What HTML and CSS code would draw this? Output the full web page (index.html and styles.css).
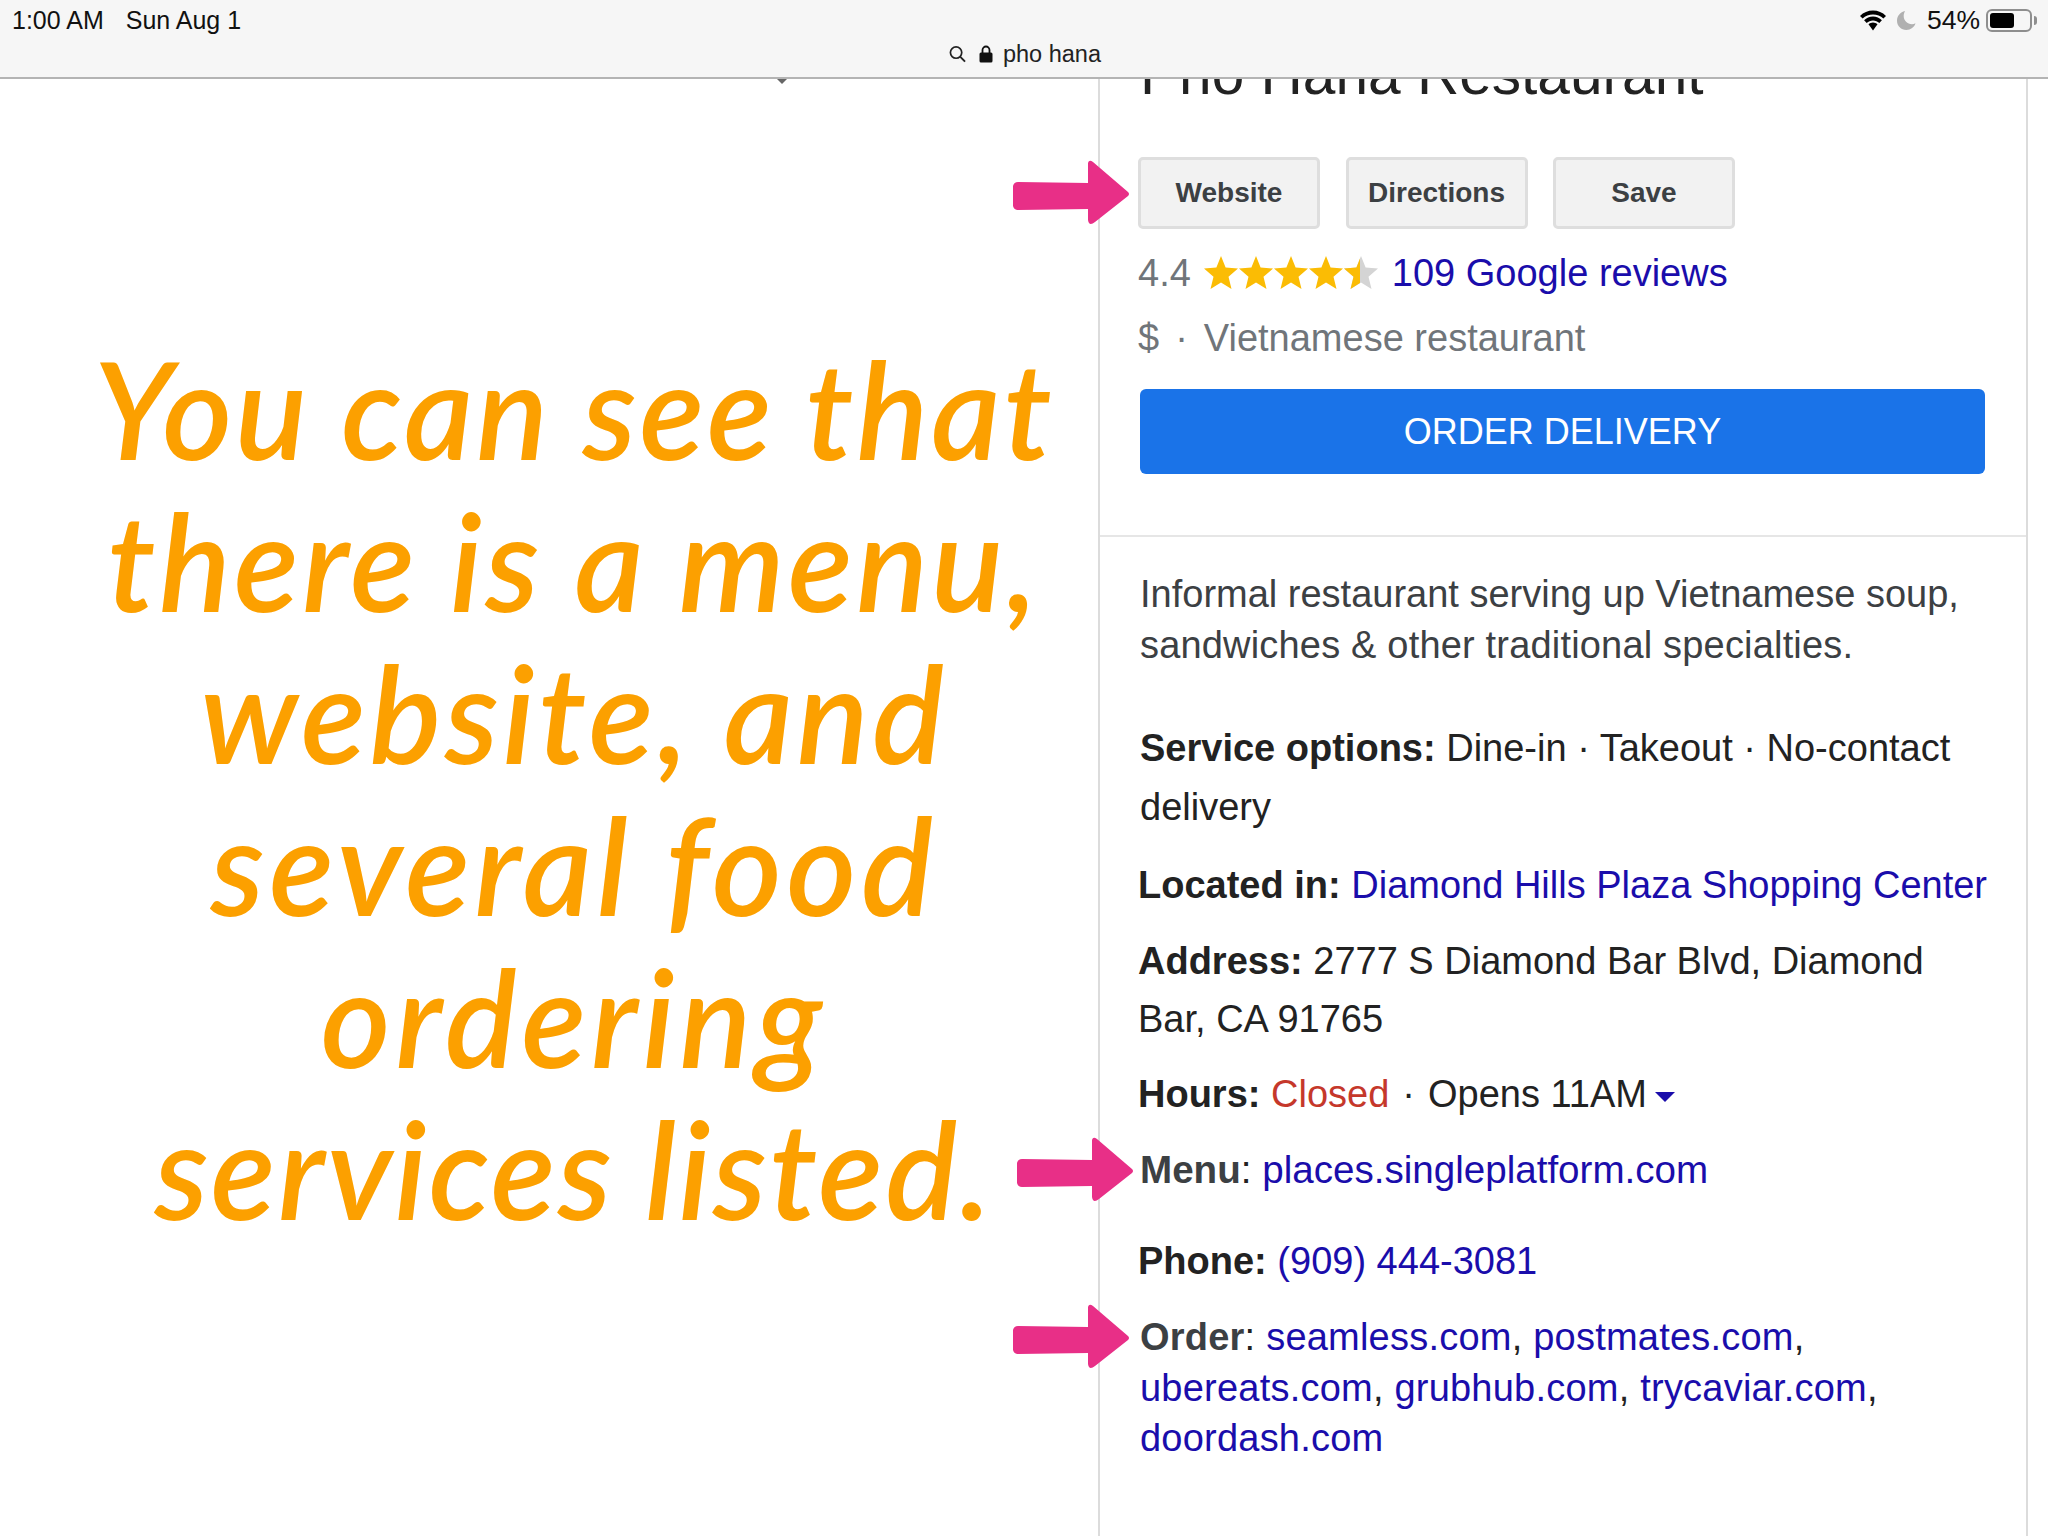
FILE: index.html
```html
<!DOCTYPE html>
<html lang="en">
<head>
<meta charset="utf-8">
<title>pho hana</title>
<link rel="stylesheet" href="styles.css">
</head>
<body>
<svg class="defs" width="0" height="0" aria-hidden="true">
  <defs>
    <path id="star" d="M17 0 L21.6 11.6 L34 12.6 L24.5 20.8 L27.5 33 L17 26.4 L6.5 33 L9.5 20.8 L0 12.6 L12.4 11.6 Z"/>
    <clipPath id="half"><rect x="0" y="0" width="16" height="34"/></clipPath>
    <path id="arrow" d="M5 22 L75 23 L75 3 Q76 -1 80 2 L115 32 Q117 34 115 36 L82 62 Q76 67 75 60 L75 49 L5 50 Q1 50 0 46 L0 26 Q1 22 5 22 Z"/>
  </defs>
</svg>
<header class="topbar">
  <div class="status">
    <div class="status-left"><span>1:00 AM</span><span>Sun Aug 1</span></div>
    <div class="status-right">
      <svg class="wifi" viewBox="0 0 28 21"><path d="M14 4.500c4 0 7.600 1.500 10.400 4.100l2.600-2.700C23.500 2.500 19 .5 14 .5S4.500 2.500 1 5.900l2.600 2.700C6.400 6 10 4.500 14 4.500z"/><path d="M14 10.500c2.400 0 4.600.9 6.300 2.500l2.600-2.700C20.600 8 17.400 6.600 14 6.600S7.400 8 5.100 10.300L7.700 13c1.700-1.600 3.900-2.500 6.300-2.500z"/><path d="M14 12.500c-1.700 0-3.300.7-4.500 1.800L14 20.500l4.500-6.200c-1.200-1.100-2.800-1.800-4.500-1.800z"/></svg>
      <svg class="moon" viewBox="0 0 19 19"><path d="M8 0C3.400 1 0 4.900 0 9.700 0 14.900 4.200 19 9.400 19c4.300 0 7.900-2.800 9.100-6.700-1.100.6-2.300.9-3.600.9C10.400 13.200 6.700 9.500 6.700 5c0-1.800.5-3.500 1.300-5z"/></svg>
      <span class="pct">54%</span>
      <div class="battery"><div class="battery-fill"></div></div>
      <div class="battery-nub"></div>
    </div>
  </div>
  <div class="urlbar">
    <svg class="search" viewBox="0 0 18 18"><circle cx="7.500" cy="7.500" r="6" fill="none" stroke="#222" stroke-width="1.800"/><path d="M12 12l5 5" stroke="#222" stroke-width="2"/></svg>
    <svg class="lock" viewBox="0 0 14 18"><path d="M3.500 8V5a3.500 3.500 0 0 1 7 0v3" fill="none" stroke="#111" stroke-width="1.800"/><rect x="0.500" y="7.500" width="13" height="10" rx="1.500" fill="#111"/></svg>
    <span class="url">pho hana</span>
  </div>
</header>

<main class="page">
  <section class="left">
    <div class="caret"></div>
    <p class="note">
      <span class="note-line l1">You can see that</span>
      <span class="note-line l2">there is a menu,</span>
      <span class="note-line l3">website, and</span>
      <span class="note-line l4">several food</span>
      <span class="note-line l5">ordering</span>
      <span class="note-line l6">services listed.</span>
    </p>
  </section>

  <section class="panel">
    <div class="panel-top">
      <h1 class="title">Pho Hana Restaurant</h1>
      <div class="buttons">
        <div class="btn">Website</div>
        <div class="btn">Directions</div>
        <div class="btn">Save</div>
      </div>
      <div class="rating">
        <span class="muted">4.4</span>
        <svg class="stars" viewBox="0 0 174 34">
          <use href="#star" class="s-on"/>
          <use href="#star" x="35" class="s-on"/>
          <use href="#star" x="70" class="s-on"/>
          <use href="#star" x="105" class="s-on"/>
          <use href="#star" x="140" class="s-off"/>
          <g transform="translate(140 0)"><use href="#star" class="s-on" clip-path="url(#half)"/></g>
        </svg>
        <a class="link">109 Google reviews</a>
      </div>
      <div class="type muted"><span>$</span><span class="type-dot">·</span><span>Vietnamese restaurant</span></div>
      <div class="order-btn">ORDER DELIVERY</div>
    </div>
    <div class="panel-body">
      <p class="desc">Informal restaurant serving up Vietnamese soup, <span class="desc-end">sandwiches &amp; other traditional specialties.</span></p>
      <p class="fact f-service"><b>Service options:</b> Dine-in · Takeout · No-contact delivery</p>
      <p class="fact f-located shift"><b>Located in:</b> <a class="link">Diamond Hills Plaza Shopping Center</a></p>
      <p class="fact f-address shift"><b>Address:</b> 2777 S Diamond Bar Blvd, Diamond Bar, CA 91765</p>
      <p class="fact f-hours shift"><b>Hours:</b> <span class="closed">Closed</span><span class="hours-dot">·</span>Opens 11AM<span class="tri"></span></p>
      <p class="fact f-menu"><b class="soft">Menu</b>: <a class="link">places.singleplatform.com</a></p>
      <p class="fact f-phone shift"><b>Phone:</b> <a class="link">(909) 444-3081</a></p>
      <p class="fact f-order"><b class="soft">Order</b>: <a class="link">seamless.com</a>, <a class="link">postmates.com</a>, <a class="link">ubereats.com</a>, <a class="link">grubhub.com</a>, <a class="link">trycaviar.com</a>, <a class="link">doordash.com</a></p>
    </div>
    <svg class="arrow a1" viewBox="0 0 117 66"><use href="#arrow"/></svg>
    <svg class="arrow a2" viewBox="0 0 117 66"><use href="#arrow"/></svg>
    <svg class="arrow a3" viewBox="0 0 117 66"><use href="#arrow"/></svg>
  </section>
</main>
</body>
</html>
```

FILE: styles.css
```css
* { box-sizing: border-box; }
html, body { margin: 0; padding: 0; }
body {
  width: 2048px;
  height: 1536px;
  overflow: hidden;
  background: #fff;
  font-family: "Liberation Sans", Arial, sans-serif;
  display: flex;
  flex-direction: column;
}
.defs { position: absolute; }
p, h1 { margin: 0; font-weight: normal; }

.topbar {
  height: 79px;
  flex: none;
  background: #f6f6f6;
  border-bottom: 2px solid #b4b4b4;
  position: relative;
  z-index: 2;
}
.status {
  height: 40px;
  display: flex;
  justify-content: space-between;
  align-items: center;
  font-size: 25px;
  color: #111;
}
.status-left { display: flex; gap: 22px; padding-left: 12px; }
.status-right { display: flex; align-items: center; padding-right: 11px; }
.wifi { width: 28px; height: 21px; fill: #000; }
.moon { width: 19px; height: 19px; margin-left: 10px; fill: #b0b0b0; }
.pct { margin-left: 11px; font-size: 26.500px; width: 54px; white-space: nowrap; }
.battery {
  width: 46px;
  height: 23px;
  margin-left: 5px;
  border: 2px solid #8e8e8e;
  border-radius: 6px;
  padding: 2px;
}
.battery-fill { width: 24px; height: 100%; background: #000; border-radius: 3px; }
.battery-nub {
  width: 3px;
  height: 9px;
  margin-left: 2px;
  background: #8e8e8e;
  border-radius: 0 3px 3px 0;
}
.urlbar {
  height: 28px;
  display: flex;
  justify-content: center;
  align-items: center;
  padding-left: 2px;
  font-size: 23.500px;
  color: #222;
}
.search { width: 17px; height: 18px; }
.lock { width: 14px; height: 18px; margin-left: 13px; }
.url { margin-left: 10px; }

.page { flex: 1; display: flex; min-height: 0; }

.left {
  width: 1098px;
  flex: none;
  position: relative;
}
.caret {
  position: absolute;
  left: 777px;
  top: 0;
  width: 0;
  height: 0;
  border-left: 5px solid transparent;
  border-right: 5px solid transparent;
  border-top: 5px solid #666;
}
.note {
  padding: 254px 0 0 50px;
  display: flex;
  flex-direction: column;
  align-items: center;
  font-family: Lato, sans-serif;
  font-style: italic;
  font-weight: 600;
  font-size: 134px;
  line-height: 152px;
  word-spacing: -2px;
  color: #fca000;
}
.note-line { display: block; white-space: nowrap; }
.l1 { letter-spacing: 3px; }
.l2 { letter-spacing: 3.400px; }
.l3 { letter-spacing: 3.750px; }
.l4 { letter-spacing: 4.700px; }
.l5 { letter-spacing: 4.900px; }
.l6 { letter-spacing: 2.400px; }

.panel {
  width: 930px;
  flex: none;
  height: 100%;
  border-left: 2px solid #dcdcdc;
  border-right: 2px solid #dcdcdc;
  position: relative;
  font-size: 38px;
  color: #222;
}
.panel-top {
  padding: 1px 40px 0 38px;
  height: 458px;
  border-bottom: 2px solid #e6e6e6;
}
.title {
  font-size: 58.600px;
  line-height: 64px;
  height: 64px;
  margin-top: -38px;
  margin-left: 2px;
  color: #222;
}
.buttons { display: flex; gap: 25.500px; margin-top: 51px; }
.btn {
  width: 182px;
  height: 72px;
  display: flex;
  align-items: center;
  justify-content: center;
  background: #f2f2f2;
  border: 3px solid #dedede;
  border-radius: 5px;
  font-size: 28px;
  font-weight: bold;
  color: #3c4043;
}
.rating {
  display: flex;
  align-items: center;
  height: 60px;
  margin-top: 14px;
}
.muted { color: #70757a; }
.stars { width: 174px; height: 34px; margin-left: 13px; margin-right: 14px; }
.s-on { fill: #fbbc04; }
.s-off { fill: #d4d4d4; }
.link { color: #1a0dab; }
.type { height: 60px; margin-top: 5px; display: flex; align-items: center; }
.type-dot { margin: 0 16px; }
.order-btn {
  margin: 21px 0 0 2px;
  width: 845px;
  height: 85px;
  background: #1a73e8;
  border-radius: 6px;
  display: flex;
  align-items: center;
  justify-content: center;
  font-size: 36px;
  color: #fff;
}

.panel-body { padding: 32px 5px 0 40px; }
.desc { line-height: 51px; color: #3c4043; }
.desc-end { letter-spacing: 0.180px; }
.fact { line-height: 58px; }
.fact b { font-weight: bold; color: #222; }
.fact b.soft { color: #3c4043; }
.shift { margin-left: -2px; }
.f-service { margin-top: 48px; line-height: 59px; }
.f-located { margin-top: 19px; line-height: 59px; white-space: nowrap; }
.f-address { margin-top: 17px; padding-right: 40px; }
.f-hours { margin-top: 17px; }
.f-menu { margin-top: 18px; font-size: 38.600px; }
.f-phone { margin-top: 33px; }
.f-order { margin-top: 22px; line-height: 50.500px; letter-spacing: 0.220px; }
.closed { color: #c5382b; }
.hours-dot { margin: 0 13px; }
.tri {
  display: inline-block;
  margin-left: 8px;
  vertical-align: middle;
  width: 0;
  height: 0;
  border-left: 10px solid transparent;
  border-right: 10px solid transparent;
  border-top: 10px solid #1a0dab;
}

.arrow { position: absolute; left: -87px; width: 117px; height: 66px; fill: #e82f87; overflow: visible; z-index: 1; }
.a1 { top: 81px; }
.a2 { top: 1058px; left: -83px; }
.a3 { top: 1225px; }
```
